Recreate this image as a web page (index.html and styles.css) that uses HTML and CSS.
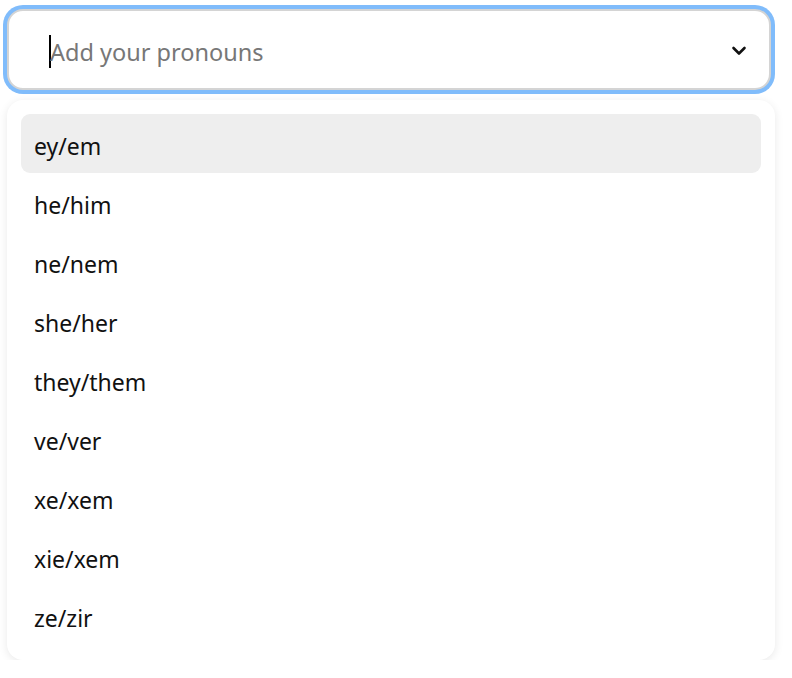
FILE: index.html
```html
<!DOCTYPE html>
<html lang="en">
<head>
<meta charset="utf-8">
<title>Pronouns</title>
<link rel="stylesheet" href="styles.css">
</head>
<body>
<div class="combo">
  <div class="field">
    <span class="caret"></span>
    <span class="placeholder">Add your pronouns</span>
    <svg class="chev" width="16" height="12" viewBox="0 0 16 12"><path d="M2.5 3 L8 8.5 L13.5 3" fill="none" stroke="#111" stroke-width="2.6" stroke-linecap="round" stroke-linejoin="round"/></svg>
  </div>
  <ul class="list">
    <li class="opt active">ey/em</li>
    <li class="opt">he/him</li>
    <li class="opt">ne/nem</li>
    <li class="opt">she/her</li>
    <li class="opt">they/them</li>
    <li class="opt">ve/ver</li>
    <li class="opt">xe/xem</li>
    <li class="opt">xie/xem</li>
    <li class="opt">ze/zir</li>
  </ul>
</div>
</body>
</html>
```
FILE: styles.css
```css
html, body { margin: 0; padding: 0; background: #fff; }
body { font-family: "Noto Sans", "Open Sans", sans-serif; color: #111; }
.combo { padding: 9px 21px 0 7px; display: flex; flex-direction: column; }
.field {
  box-sizing: border-box;
  height: 81px;
  border: 2px solid #d4d4d4;
  border-radius: 16px;
  box-shadow: 0 0 0 4px #80bcfb;
  display: flex;
  align-items: center;
  padding: 3px 22px 0 40px;
  background: #fff;
}
.caret { width: 2px; height: 33px; background: #000; }
.placeholder { flex: 1; font-size: 23.5px; color: #777; margin-left: -1px; padding-top: 1px; }
.chev { display: block; }
.list {
  list-style: none;
  margin: 10px 0 0 0;
  padding: 14px 14px 15px 14px;
  border-radius: 16px;
  background: #fff;
  box-shadow: 0 2px 10px rgba(0,0,0,0.09);
  width: 740px;
}
.opt {
  height: 59px;
  display: flex;
  align-items: center;
  padding: 4px 0 0 13px;
  box-sizing: border-box;
  font-size: 23px;
  border-radius: 9px;
}
.opt.active { background: #eeeeee; }
```
